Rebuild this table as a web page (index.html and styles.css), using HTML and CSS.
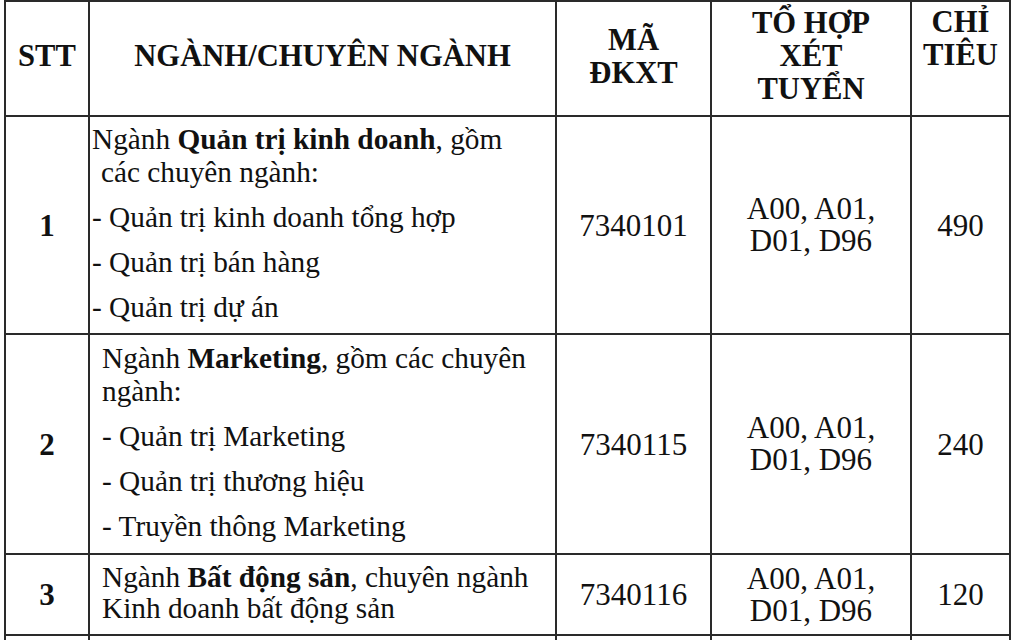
FILE: index.html
```html
<!DOCTYPE html>
<html lang="vi">
<head>
<meta charset="utf-8">
<title>Chỉ tiêu tuyển sinh</title>
<link rel="stylesheet" href="styles.css">
</head>
<body>
<div class="sheet">
  <div class="grid">
    <div class="cell hd center">STT</div>
    <div class="cell hd center">NGÀNH/CHUYÊN NGÀNH</div>
    <div class="cell hd center">MÃ<br>ĐKXT</div>
    <div class="cell hd center">TỔ HỢP<br>XÉT<br>TUYỂN</div>
    <div class="cell hd center top">CHỈ<br>TIÊU</div>

    <div class="cell bold center num">1</div>
    <div class="cell name tight">
      <div class="para">Ngành <b>Quản trị kinh doanh</b>, gồm<br><span class="indent">các chuyên ngành:</span></div>
      <div class="para">- Quản trị kinh doanh tổng hợp</div>
      <div class="para">- Quản trị bán hàng</div>
      <div class="para">- Quản trị dự án</div>
    </div>
    <div class="cell center num">7340101</div>
    <div class="cell center combo">A00, A01,<br>D01, D96</div>
    <div class="cell center num">490</div>

    <div class="cell bold center num">2</div>
    <div class="cell name">
      <div class="para">Ngành <b>Marketing</b>, gồm các chuyên<br>ngành:</div>
      <div class="para">- Quản trị Marketing</div>
      <div class="para">- Quản trị thương hiệu</div>
      <div class="para">- Truyền thông Marketing</div>
    </div>
    <div class="cell center num">7340115</div>
    <div class="cell center combo">A00, A01,<br>D01, D96</div>
    <div class="cell center num">240</div>

    <div class="cell bold center num">3</div>
    <div class="cell name short">
      <div class="para">Ngành <b>Bất động sản</b>, chuyên ngành<br>Kinh doanh bất động sản</div>
    </div>
    <div class="cell center num">7340116</div>
    <div class="cell center combo">A00, A01,<br>D01, D96</div>
    <div class="cell center num">120</div>

    <div class="cell"></div>
    <div class="cell"></div>
    <div class="cell"></div>
    <div class="cell"></div>
    <div class="cell"></div>
  </div>
</div>
</body>
</html>
```

FILE: styles.css
```css
html, body {
  margin: 0;
  padding: 0;
  background: #ffffff;
}
body {
  width: 1020px;
  height: 640px;
  overflow: hidden;
  font-family: "Liberation Serif", "Times New Roman", serif;
  font-size: 29.3px;
  color: #111111;
}
.sheet {
  padding-left: 4px;
}
.grid {
  display: grid;
  grid-template-columns: 84px 467px 155px 200px 99px;
  grid-template-rows: 115px 218px 220px 81px 60px;
  border-top: 2px solid #2a2a2a;
  border-left: 2px solid #2a2a2a;
  width: max-content;
}
.cell {
  box-sizing: border-box;
  border-right: 2px solid #2a2a2a;
  border-bottom: 2px solid #2a2a2a;
  display: flex;
  flex-direction: column;
  justify-content: center;
  line-height: 33px;
}
.center {
  align-items: center;
  text-align: center;
}
.hd {
  font-weight: bold;
  font-size: 30.6px;
  line-height: 33px;
  padding-bottom: 4px;
}
.top {
  justify-content: flex-start;
  padding-top: 4px;
  padding-bottom: 0;
}
.bold {
  font-weight: bold;
}
.num {
  font-size: 31px;
}
.combo {
  font-size: 31px;
  line-height: 32px;
}
.name {
  padding-left: 12px;
  gap: 12px;
  padding-bottom: 3px;
}
.name.tight {
  padding-left: 2px;
}
.name.short {
  line-height: 31px;
}
.indent {
  padding-left: 9px;
}
b {
  font-weight: bold;
}
```
